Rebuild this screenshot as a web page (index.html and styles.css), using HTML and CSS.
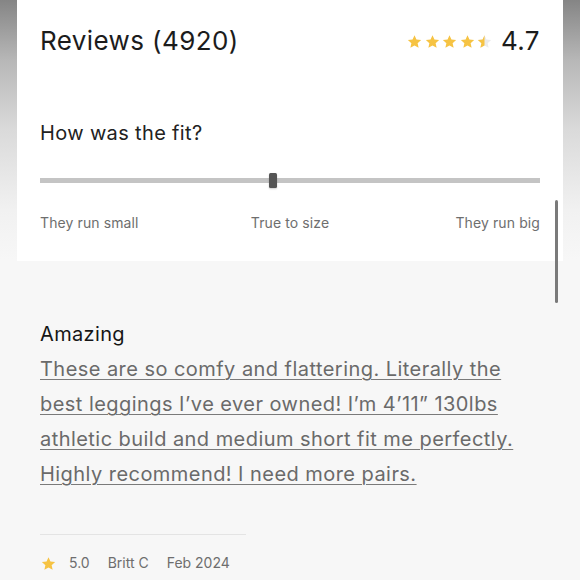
FILE: index.html
```html
<!DOCTYPE html>
<html lang="en">
<head>
<meta charset="utf-8">
<link rel="stylesheet" href="styles.css">
</head>
<body>
<div class="page">
  <section class="summary">
    <header class="head">
      <h1 class="title">Reviews (4920)</h1>
      <div class="rating">
        <div class="stars">
          <svg class="star" viewBox="0 0 24 24"><path d="M12 1.8l3.1 6.9 7.5.8-5.6 5.1 1.6 7.4L12 18.2 5.4 22l1.6-7.4L1.4 9.5l7.5-.8z" fill="#f6c343"/></svg>
          <svg class="star" viewBox="0 0 24 24"><path d="M12 1.8l3.1 6.9 7.5.8-5.6 5.1 1.6 7.4L12 18.2 5.4 22l1.6-7.4L1.4 9.5l7.5-.8z" fill="#f6c343"/></svg>
          <svg class="star" viewBox="0 0 24 24"><path d="M12 1.8l3.1 6.9 7.5.8-5.6 5.1 1.6 7.4L12 18.2 5.4 22l1.6-7.4L1.4 9.5l7.5-.8z" fill="#f6c343"/></svg>
          <svg class="star" viewBox="0 0 24 24"><path d="M12 1.8l3.1 6.9 7.5.8-5.6 5.1 1.6 7.4L12 18.2 5.4 22l1.6-7.4L1.4 9.5l7.5-.8z" fill="#f6c343"/></svg>
          <svg class="star" viewBox="0 0 24 24"><path d="M12 1.8l3.1 6.9 7.5.8-5.6 5.1 1.6 7.4L12 18.2 5.4 22l1.6-7.4L1.4 9.5l7.5-.8z" fill="#ebebeb"/><path d="M12 1.8V18.2L5.4 22l1.6-7.4L1.4 9.5l7.5-.8z" fill="#f6c343"/></svg>
        </div>
        <span class="score">4.7</span>
      </div>
    </header>

    <h2 class="fit-title">How was the fit?</h2>
    <div class="slider">
      <div class="track"></div>
      <div class="thumb"></div>
    </div>
    <div class="fit-labels">
      <span class="lbl-left">They run small</span>
      <span class="lbl-mid">True to size</span>
      <span class="lbl-right">They run big</span>
    </div>
  </section>

  <article class="review">
    <h3 class="review-title">Amazing</h3>
    <p class="review-body">These are so comfy and flattering. Literally the best leggings I’ve ever owned! I’m 4’11” 130lbs athletic build and medium short fit me perfectly. Highly recommend! I need more pairs.</p>
    <hr class="divider">
    <div class="meta">
      <svg class="meta-star" viewBox="0 0 24 24"><path d="M12 1.8l3.1 6.9 7.5.8-5.6 5.1 1.6 7.4L12 18.2 5.4 22l1.6-7.4L1.4 9.5l7.5-.8z" fill="#f6c343"/></svg>
      <span>5.0</span>
      <span>Britt C</span>
      <span>Feb 2024</span>
    </div>
  </article>
  <div class="scrollbar"></div>
</div>
</body>
</html>
```

FILE: styles.css
```css
html, body {
  margin: 0;
  padding: 0;
}
body {
  width: 580px;
  height: 580px;
  overflow: hidden;
  font-family: Inter, "Noto Sans", "Liberation Sans", sans-serif;
  background: linear-gradient(to bottom, #858585 0, #b7b7b7 60px, #dadada 130px, #f1f1f1 210px, #f7f7f7 260px, #f7f7f7 100%);
}
.page {
  position: relative;
  margin: 0 17px;
  height: 580px;
}
.summary {
  background: #ffffff;
  padding: 24px 23px 29px;
}
.head {
  display: flex;
  justify-content: space-between;
  align-items: center;
  height: 34px;
}
.title {
  margin: 0;
  font-size: 26px;
  font-weight: 400;
  line-height: 34px;
  color: #1c1c1c;
  letter-spacing: 0.4px;
}
.rating {
  display: flex;
  align-items: center;
  gap: 9px;
}
.stars {
  display: flex;
  gap: 2.5px;
}
.star {
  width: 15px;
  height: 15px;
  display: block;
}
.score {
  font-size: 26px;
  line-height: 34px;
  color: #1c1c1c;
  letter-spacing: 0.4px;
}
.fit-title {
  margin: 62px 0 0;
  font-size: 20px;
  font-weight: 400;
  line-height: 26px;
  color: #222222;
  letter-spacing: 0.35px;
}
.slider {
  margin-top: 27px;
  height: 15px;
  display: flex;
  align-items: center;
  position: relative;
}
.track {
  flex: 1;
  height: 5px;
  background: #c4c4c4;
}
.thumb {
  position: absolute;
  left: 229px;
  top: 0;
  width: 8px;
  height: 15px;
  border-radius: 1.5px;
  background: #555555;
  box-shadow: 0 1px 2px rgba(0,0,0,0.2);
}
.fit-labels {
  margin-top: 26px;
  display: grid;
  grid-template-columns: 1fr auto 1fr;
  font-size: 14px;
  line-height: 18px;
  color: #6e6e6e;
  letter-spacing: 0.1px;
}
.lbl-left { justify-self: start; }
.lbl-mid { justify-self: center; }
.lbl-right { justify-self: end; }
.review {
  padding: 60px 23px 0;
}
.review-title {
  margin: 0;
  font-size: 20px;
  font-weight: 400;
  line-height: 26px;
  color: #161616;
  letter-spacing: 0.35px;
}
.review-body {
  margin: 5px 0 0;
  font-size: 20px;
  line-height: 35px;
  color: #6a6a6a;
  letter-spacing: 0.45px;
  text-decoration: underline;
  text-decoration-thickness: 1px;
  text-underline-offset: 3px;
  text-decoration-color: #7a7a7a;
}
.divider {
  margin: 42px 0 0;
  width: 206px;
  border: 0;
  border-top: 1px solid #e4e4e4;
  height: 0;
}
.meta {
  margin-top: 19px;
  display: flex;
  align-items: center;
  gap: 18px;
  font-size: 14px;
  line-height: 18px;
  color: #6e6e6e;
}
.meta-star {
  width: 15px;
  height: 15px;
  margin-left: 1px;
  margin-right: -5px;
}
.scrollbar {
  position: absolute;
  right: 5px;
  top: 200px;
  width: 3px;
  height: 103px;
  border-radius: 2px;
  background: #7a7a7a;
}
```
